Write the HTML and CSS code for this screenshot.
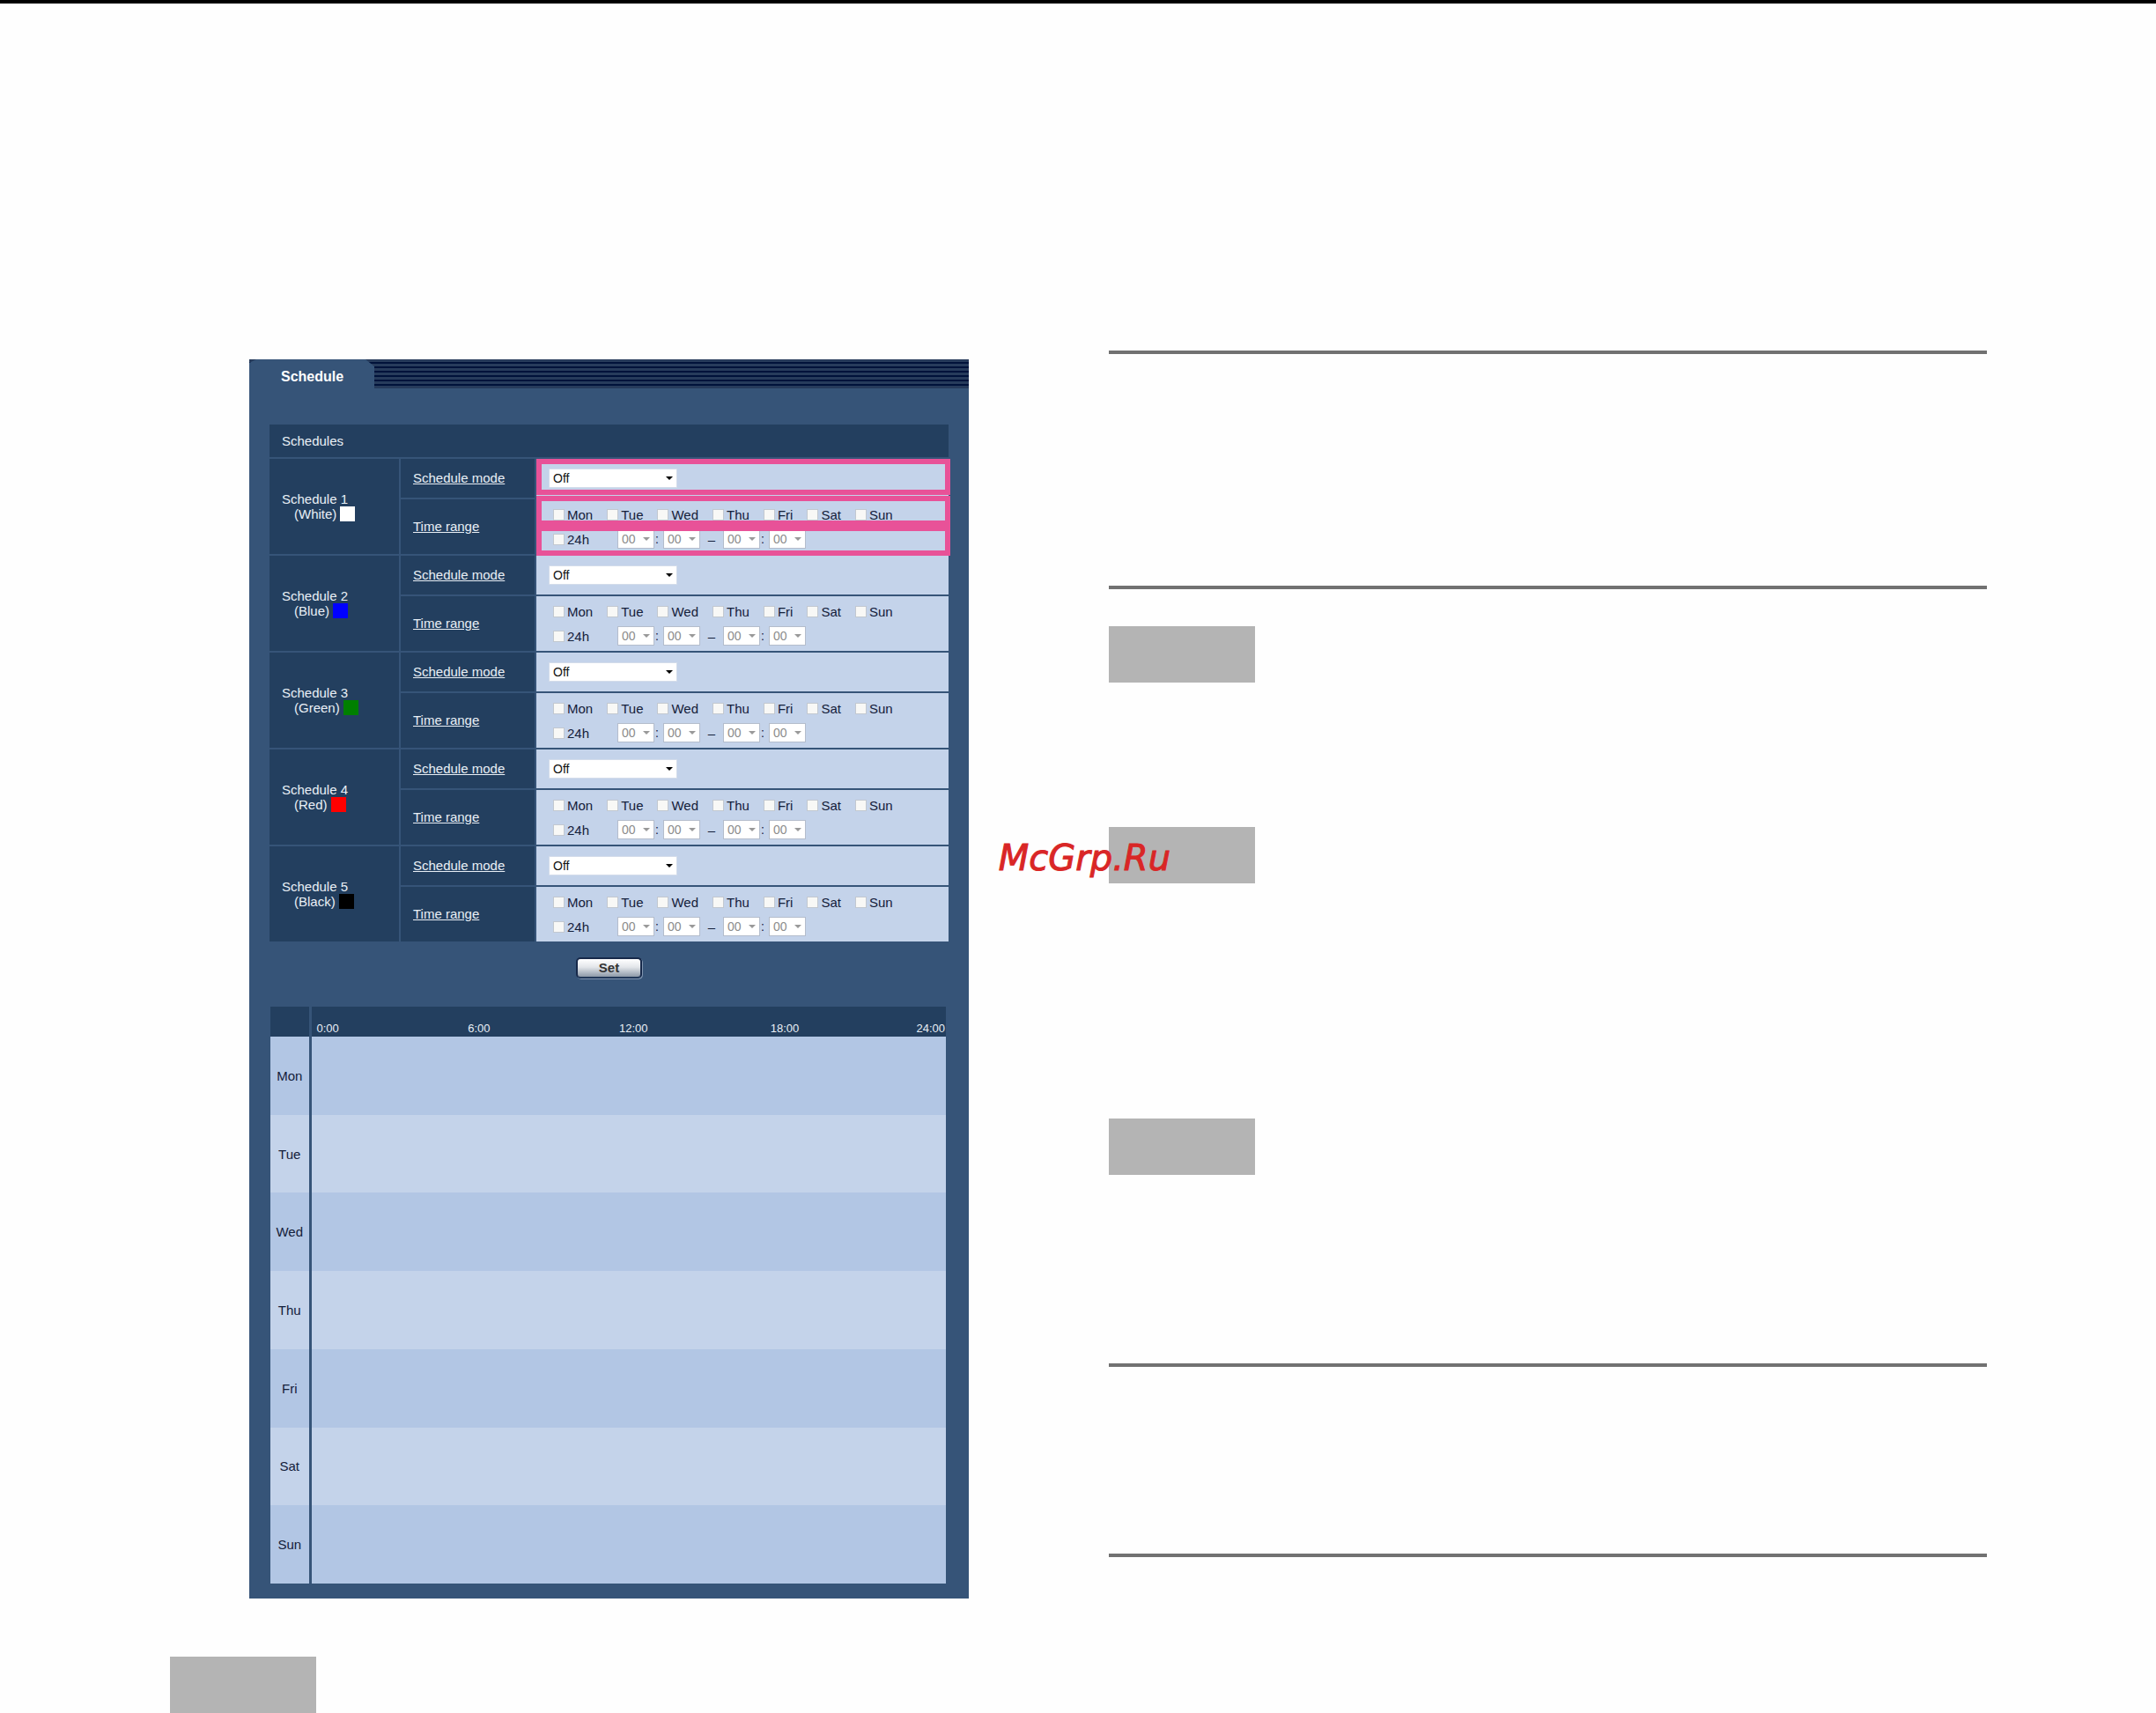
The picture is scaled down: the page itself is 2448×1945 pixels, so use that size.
FILE: index.html
```html
<!DOCTYPE html>
<html lang="en">
<head>
    <meta charset="UTF-8">
    <meta name="viewport" content="width=device-width, initial-scale=1.0">
    <title>Schedule</title>
    <link rel="stylesheet" href="styles.css">
</head>
<body>
    <div class="page">
        <!-- Left column: settings screen -->
        <main class="column-left">
            <div class="panel">
                <div class="tab-bar">
                    <h1 class="tab">Schedule</h1>
                </div>

                <form class="schedule-form">
                    <div class="schedule-wrap">
                        <table class="schedule-table">
                            <colgroup>
                                <col class="col-name">
                                <col class="col-item">
                                <col>
                            </colgroup>
                            <thead>
                                <tr><th colspan="3">Schedules</th></tr>
                            </thead>
                            <tbody>
                                <tr class="mode-row">
                                    <th rowspan="2">Schedule 1<span class="color-name">(White)<i class="swatch white"></i></span></th>
                                    <th class="item"><a href="#">Schedule mode</a></th>
                                    <td><select class="mode" aria-label="Schedule 1 mode"><option>Off</option></select></td>
                                </tr>
                                <tr class="time-row">
                                    <th class="item"><a href="#">Time range</a></th>
                                    <td>
                                        <div class="days">
                                            <label><input type="checkbox">Mon</label>
                                            <label><input type="checkbox">Tue</label>
                                            <label><input type="checkbox">Wed</label>
                                            <label><input type="checkbox">Thu</label>
                                            <label><input type="checkbox">Fri</label>
                                            <label><input type="checkbox">Sat</label>
                                            <label><input type="checkbox">Sun</label>
                                        </div>
                                        <div class="hours">
                                            <label><input type="checkbox">24h</label>
                                            <select disabled aria-label="Start hour"><option>00</option></select>
                                            <span class="colon">:</span>
                                            <select disabled aria-label="Start minute"><option>00</option></select>
                                            <span class="dash">–</span>
                                            <select disabled aria-label="End hour"><option>00</option></select>
                                            <span class="colon">:</span>
                                            <select disabled aria-label="End minute"><option>00</option></select>
                                        </div>
                                    </td>
                                </tr>
                            </tbody>
                            <tbody>
                                <tr class="mode-row">
                                    <th rowspan="2">Schedule 2<span class="color-name">(Blue)<i class="swatch blue"></i></span></th>
                                    <th class="item"><a href="#">Schedule mode</a></th>
                                    <td><select class="mode" aria-label="Schedule 2 mode"><option>Off</option></select></td>
                                </tr>
                                <tr class="time-row">
                                    <th class="item"><a href="#">Time range</a></th>
                                    <td>
                                        <div class="days">
                                            <label><input type="checkbox">Mon</label>
                                            <label><input type="checkbox">Tue</label>
                                            <label><input type="checkbox">Wed</label>
                                            <label><input type="checkbox">Thu</label>
                                            <label><input type="checkbox">Fri</label>
                                            <label><input type="checkbox">Sat</label>
                                            <label><input type="checkbox">Sun</label>
                                        </div>
                                        <div class="hours">
                                            <label><input type="checkbox">24h</label>
                                            <select disabled aria-label="Start hour"><option>00</option></select>
                                            <span class="colon">:</span>
                                            <select disabled aria-label="Start minute"><option>00</option></select>
                                            <span class="dash">–</span>
                                            <select disabled aria-label="End hour"><option>00</option></select>
                                            <span class="colon">:</span>
                                            <select disabled aria-label="End minute"><option>00</option></select>
                                        </div>
                                    </td>
                                </tr>
                            </tbody>
                            <tbody>
                                <tr class="mode-row">
                                    <th rowspan="2">Schedule 3<span class="color-name">(Green)<i class="swatch green"></i></span></th>
                                    <th class="item"><a href="#">Schedule mode</a></th>
                                    <td><select class="mode" aria-label="Schedule 3 mode"><option>Off</option></select></td>
                                </tr>
                                <tr class="time-row">
                                    <th class="item"><a href="#">Time range</a></th>
                                    <td>
                                        <div class="days">
                                            <label><input type="checkbox">Mon</label>
                                            <label><input type="checkbox">Tue</label>
                                            <label><input type="checkbox">Wed</label>
                                            <label><input type="checkbox">Thu</label>
                                            <label><input type="checkbox">Fri</label>
                                            <label><input type="checkbox">Sat</label>
                                            <label><input type="checkbox">Sun</label>
                                        </div>
                                        <div class="hours">
                                            <label><input type="checkbox">24h</label>
                                            <select disabled aria-label="Start hour"><option>00</option></select>
                                            <span class="colon">:</span>
                                            <select disabled aria-label="Start minute"><option>00</option></select>
                                            <span class="dash">–</span>
                                            <select disabled aria-label="End hour"><option>00</option></select>
                                            <span class="colon">:</span>
                                            <select disabled aria-label="End minute"><option>00</option></select>
                                        </div>
                                    </td>
                                </tr>
                            </tbody>
                            <tbody>
                                <tr class="mode-row">
                                    <th rowspan="2">Schedule 4<span class="color-name">(Red)<i class="swatch red"></i></span></th>
                                    <th class="item"><a href="#">Schedule mode</a></th>
                                    <td><select class="mode" aria-label="Schedule 4 mode"><option>Off</option></select></td>
                                </tr>
                                <tr class="time-row">
                                    <th class="item"><a href="#">Time range</a></th>
                                    <td>
                                        <div class="days">
                                            <label><input type="checkbox">Mon</label>
                                            <label><input type="checkbox">Tue</label>
                                            <label><input type="checkbox">Wed</label>
                                            <label><input type="checkbox">Thu</label>
                                            <label><input type="checkbox">Fri</label>
                                            <label><input type="checkbox">Sat</label>
                                            <label><input type="checkbox">Sun</label>
                                        </div>
                                        <div class="hours">
                                            <label><input type="checkbox">24h</label>
                                            <select disabled aria-label="Start hour"><option>00</option></select>
                                            <span class="colon">:</span>
                                            <select disabled aria-label="Start minute"><option>00</option></select>
                                            <span class="dash">–</span>
                                            <select disabled aria-label="End hour"><option>00</option></select>
                                            <span class="colon">:</span>
                                            <select disabled aria-label="End minute"><option>00</option></select>
                                        </div>
                                    </td>
                                </tr>
                            </tbody>
                            <tbody>
                                <tr class="mode-row">
                                    <th rowspan="2">Schedule 5<span class="color-name">(Black)<i class="swatch black"></i></span></th>
                                    <th class="item"><a href="#">Schedule mode</a></th>
                                    <td><select class="mode" aria-label="Schedule 5 mode"><option>Off</option></select></td>
                                </tr>
                                <tr class="time-row">
                                    <th class="item"><a href="#">Time range</a></th>
                                    <td>
                                        <div class="days">
                                            <label><input type="checkbox">Mon</label>
                                            <label><input type="checkbox">Tue</label>
                                            <label><input type="checkbox">Wed</label>
                                            <label><input type="checkbox">Thu</label>
                                            <label><input type="checkbox">Fri</label>
                                            <label><input type="checkbox">Sat</label>
                                            <label><input type="checkbox">Sun</label>
                                        </div>
                                        <div class="hours">
                                            <label><input type="checkbox">24h</label>
                                            <select disabled aria-label="Start hour"><option>00</option></select>
                                            <span class="colon">:</span>
                                            <select disabled aria-label="Start minute"><option>00</option></select>
                                            <span class="dash">–</span>
                                            <select disabled aria-label="End hour"><option>00</option></select>
                                            <span class="colon">:</span>
                                            <select disabled aria-label="End minute"><option>00</option></select>
                                        </div>
                                    </td>
                                </tr>
                            </tbody>
                        </table>

                        <!-- Pink frames over the first schedule -->
                        <div class="highlights">
                            <div class="frame frame-mode"></div>
                            <div class="frame"></div>
                            <div class="frame"></div>
                        </div>
                    </div>

                    <button type="button" class="set-btn">Set</button>
                </form>

                <table class="timeline">
                    <thead>
                        <tr>
                            <th class="day"></th>
                            <th>
                                <div class="time-scale">
                                    <span>0:00</span>
                                    <span>6:00</span>
                                    <span>12:00</span>
                                    <span>18:00</span>
                                    <span>24:00</span>
                                </div>
                            </th>
                        </tr>
                    </thead>
                    <tbody>
                        <tr><th class="day">Mon</th><td></td></tr>
                        <tr><th class="day">Tue</th><td></td></tr>
                        <tr><th class="day">Wed</th><td></td></tr>
                        <tr><th class="day">Thu</th><td></td></tr>
                        <tr><th class="day">Fri</th><td></td></tr>
                        <tr><th class="day">Sat</th><td></td></tr>
                        <tr><th class="day">Sun</th><td></td></tr>
                    </tbody>
                </table>
            </div>
            <div class="note"></div>
        </main>

        <!-- Right column: rules and note boxes -->
        <aside class="column-right">
            <hr class="rule">
            <hr class="rule rule-title">
            <div class="note note-first"></div>
            <div class="note note-second">
                <span class="watermark">McGrp.Ru</span>
            </div>
            <div class="note note-third"></div>
            <hr class="rule rule-section">
            <hr class="rule rule-last">
        </aside>
    </div>
</body>
</html>
```
FILE: styles.css
```css
* {
    margin: 0;
    padding: 0;
    box-sizing: border-box;
}

body {
    font-family: "Liberation Sans", Arial, sans-serif;
    font-size: 15px;
    line-height: 17px;
    background-color: #fefefe;
    border-top: 4px solid #000;
}

.page {
    display: grid;
    grid-template-columns: 907fr 997fr;
    column-gap: 159px;
    padding: 394px 192px 0 193px;
}

.column-left {
    padding-top: 10px;
}

/* Settings panel */
.panel {
    margin-left: 90px;
    padding-bottom: 17px;
    background-color: #365478;
}

.tab-bar {
    display: flex;
    height: 33px;
    background: repeating-linear-gradient(#273b5b 0 3px, #00123a 3px 5px);
}

.tab {
    width: 142px;
    padding-left: 36px;
    font-size: 16px;
    line-height: 40px;
    color: #fff;
    background-color: #365478;
    clip-path: polygon(8px 0, 132px 0, 142px 8px, 142px 100%, 0 100%, 0 4px);
}

/* Schedule table */
.schedule-form {
    padding: 39px 21px 32px;
}

.schedule-wrap {
    position: relative;
}

.schedule-table {
    width: 100%;
    border-spacing: 2px;
    table-layout: fixed;
}

.col-name {
    width: 147px;
}

.col-item {
    width: 152px;
}

.schedule-table th {
    padding: 0 14px;
    font-weight: normal;
    text-align: left;
    color: #e9eff6;
    background-color: #233f5f;
}

.schedule-table thead th {
    height: 37px;
    padding-bottom: 1px;
}

.schedule-table .item {
    padding-bottom: 2px;
}

.schedule-table a {
    color: #e9eff6;
}

.schedule-table td {
    padding: 0 14px;
    color: #14203a;
    background-color: #c4d3ea;
}

.mode-row {
    height: 44px;
}

.time-row {
    height: 62px;
}

.color-name {
    display: flex;
    gap: 4px;
    padding-left: 14px;
}

.swatch {
    width: 17px;
    height: 17px;
}

.white { background-color: #fff; }
.blue { background-color: #00f; }
.green { background-color: #008000; }
.red { background-color: #f00; }
.black { background-color: #000; }

/* Form controls */
select {
    display: block;
    width: 42px;
    height: 22px;
    padding-left: 4px;
    appearance: none;
    font-family: inherit;
    font-size: 14px;
    color: #111;
    border: 1px solid #b4bdcc;
    background: #fff url("data:image/svg+xml,%3Csvg xmlns='http://www.w3.org/2000/svg' width='8' height='4'%3E%3Cpath d='M0 0h8L4 4z' fill='%23000'/%3E%3C/svg%3E") no-repeat right 4px center;
}

select:disabled {
    opacity: 1;
    color: #8c8c8c;
    background-image: url("data:image/svg+xml,%3Csvg xmlns='http://www.w3.org/2000/svg' width='8' height='4'%3E%3Cpath d='M0 0h8L4 4z' fill='%23999'/%3E%3C/svg%3E");
}

.mode {
    width: 146px;
    border-color: #d3dcea;
}

.days,
.hours {
    display: flex;
    align-items: center;
    height: 22px;
    padding-left: 5px;
}

.days {
    gap: 16px;
}

.hours {
    margin-top: 6px;
}

label {
    display: flex;
    align-items: center;
    gap: 3px;
}

.hours label {
    width: 73px;
}

input[type="checkbox"] {
    width: 13px;
    height: 13px;
    appearance: none;
    border: 1px solid #c2c8d0;
    background-color: #f8f8f6;
}

input[type="checkbox"]:checked {
    background-color: #233f5f;
}

.colon {
    width: 10px;
    padding-left: 1px;
    font-size: 14px;
}

.dash {
    width: 26px;
    text-align: center;
}

/* Frames laid over the first schedule */
.highlights {
    position: absolute;
    top: 41px;
    left: 305px;
    right: 0;
    pointer-events: none;
}

.frame {
    height: 34px;
    border: 6px solid #e85298;
}

.frame-mode {
    height: 41px;
    margin-bottom: 1px;
}

.set-btn {
    display: block;
    width: 75px;
    height: 24px;
    margin: 16px auto 0;
    padding-bottom: 2px;
    font-family: inherit;
    font-size: 15px;
    font-weight: bold;
    color: #333;
    border: 2px solid #17294a;
    border-bottom-color: #22395a;
    border-radius: 5px;
    box-shadow: 1px 1px 0 #8095b0;
    background: linear-gradient(#fff, #e3e6ea 45%, #8d99a8);
    cursor: pointer;
}

/* Weekly timeline */
.timeline {
    width: calc(100% - 50px);
    height: 655px;
    margin-left: 24px;
    border-collapse: collapse;
    table-layout: fixed;
}

.timeline th {
    font-weight: normal;
}

.timeline thead tr {
    height: 34px;
    color: #e9eff6;
    background-color: #233f5f;
}

.timeline thead th {
    vertical-align: bottom;
}

.timeline tbody tr {
    color: #14203a;
    background-color: #c4d3ea;
}

.timeline tbody tr:nth-child(odd) {
    background-color: #b2c6e4;
}

.timeline .day {
    width: 45px;
    border-right: 3px solid #365478;
}

.time-scale {
    display: grid;
    grid-template-columns: repeat(3, 171fr) 165fr auto;
    padding: 0 1px 1px 6px;
    font-size: 13px;
    line-height: 16px;
    text-align: left;
}

/* Notes and rules */
.note {
    width: 166px;
    height: 64px;
    background-color: #b4b4b4;
}

.column-left .note {
    margin-top: 66px;
}

.rule {
    height: 4px;
    border: none;
    background-color: #717171;
}

.rule-title {
    margin-top: 263px;
}

.note-first {
    margin-top: 42px;
}

.note-second {
    position: relative;
    margin-top: 164px;
}

.note-third {
    margin-top: 267px;
}

.rule-section {
    margin-top: 214px;
}

.rule-last {
    margin-top: 212px;
}

.watermark {
    position: absolute;
    top: 11px;
    right: 96px;
    font-family: "DejaVu Sans", Verdana, sans-serif;
    font-size: 40px;
    font-style: oblique;
    line-height: 48px;
    color: #d92626;
    -webkit-text-stroke: 1px #d92626;
}

/* Narrow screens */
@media (max-width: 1600px) {
    .page {
        grid-template-columns: 1fr;
        row-gap: 60px;
        padding: 40px 24px;
    }

    .panel {
        margin-left: 0;
    }
}
```
